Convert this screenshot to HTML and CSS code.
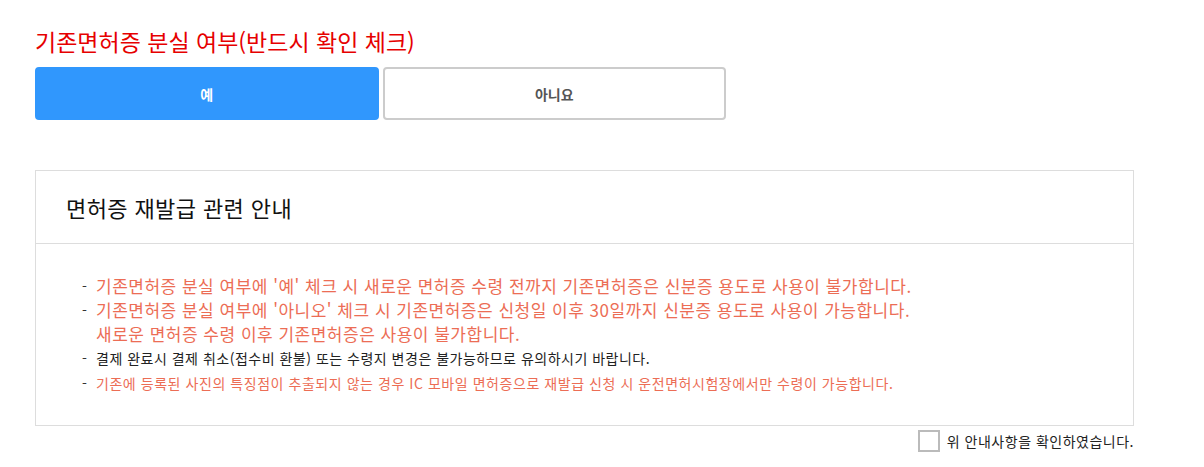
FILE: index.html
```html
<!DOCTYPE html>
<html lang="ko">
  <head>
    <meta charset="UTF-8" />
    <meta name="viewport" content="width=device-width, initial-scale=1.0" />
    <title>면허증 재발급</title>
    <link rel="stylesheet" href="styles.css">
  </head>
  <body>
    <div class="wrap">
      <h2 class="lost-title">기존면허증 분실 여부(반드시 확인 체크)</h2>
      <div class="choice">
        <button class="choice-btn active">예</button>
        <button class="choice-btn">아니요</button>
      </div>

      <div class="notice">
        <div class="notice-head">면허증 재발급 관련 안내</div>
        <ul class="notice-list">
          <li class="big"><span class="dash">-</span><span>기존면허증 분실 여부에 '예' 체크 시 새로운 면허증 수령 전까지 기존면허증은 신분증 용도로 사용이 불가합니다.</span></li>
          <li class="big"><span class="dash">-</span><span>기존면허증 분실 여부에 '아니오' 체크 시 기존면허증은 신청일 이후 30일까지 신분증 용도로 사용이 가능합니다.<br>새로운 면허증 수령 이후 기존면허증은 사용이 불가합니다.</span></li>
          <li class="plain"><span class="dash">-</span><span>결제 완료시 결제 취소(접수비 환불) 또는 수령지 변경은 불가능하므로 유의하시기 바랍니다.</span></li>
          <li class="small"><span class="dash">-</span><span>기존에 등록된 사진의 특징점이 추출되지 않는 경우 IC 모바일 면허증으로 재발급 신청 시 운전면허시험장에서만 수령이 가능합니다.</span></li>
        </ul>
      </div>

      <label class="agree">
        <input type="checkbox" />
        <span class="box"></span>
        <span>위 안내사항을 확인하였습니다.</span>
      </label>
    </div>
  </body>
</html>
```

FILE: styles.css
```css
* {
  box-sizing: border-box;
}

body {
  margin: 0;
  background: #fff;
  font-family: "Malgun Gothic", "Noto Sans CJK KR", sans-serif;
  color: #222;
}

.wrap {
  width: 1134px;
  padding: 26px 0 0 35px;
}

.lost-title {
  margin: 0;
  font-size: 23px;
  font-weight: normal;
  line-height: 31px;
  color: #e60000;
}

.choice {
  display: flex;
  gap: 4px;
  margin-top: 10px;
  width: 691px;
}

.choice-btn {
  flex: 1;
  height: 53px;
  border: 2px solid #ccc;
  border-radius: 4px;
  background: #fff;
  font-family: inherit;
  font-size: 14px;
  font-weight: bold;
  color: #555;
}

.choice-btn.active {
  background: #3097fd;
  border-color: #3097fd;
  color: #fff;
}

.notice {
  margin-top: 50px;
  border: 1px solid #ddd;
}

.notice-head {
  height: 73px;
  padding-left: 30px;
  border-bottom: 1px solid #ddd;
  font-size: 22px;
  letter-spacing: 0.4px;
  line-height: 72px;
  color: #111;
}

.notice-list {
  list-style: none;
  margin: 0;
  padding: 30px 20px 29px 46px;
}

.notice-list li {
  display: flex;
}

.dash {
  width: 14px;
  flex: none;
  color: #333;
  font-size: 14px;
  letter-spacing: 0;
}

.big {
  font-size: 17px;
  letter-spacing: 0.5px;
  line-height: 24px;
  color: #ec6d55;
}

.plain {
  font-size: 14px;
  letter-spacing: 0.5px;
  line-height: 25px;
  color: #222;
}

.small {
  font-size: 14px;
  letter-spacing: 0.55px;
  line-height: 25px;
  color: #ec6d55;
}

.agree {
  display: flex;
  justify-content: flex-end;
  align-items: center;
  gap: 7px;
  margin-top: 4px;
  font-size: 14px;
  letter-spacing: 0.5px;
  color: #222;
}

.agree input {
  display: none;
}

.agree .box {
  width: 22px;
  height: 22px;
  border: 2px solid #bbb;
  background: #fff;
}
```
